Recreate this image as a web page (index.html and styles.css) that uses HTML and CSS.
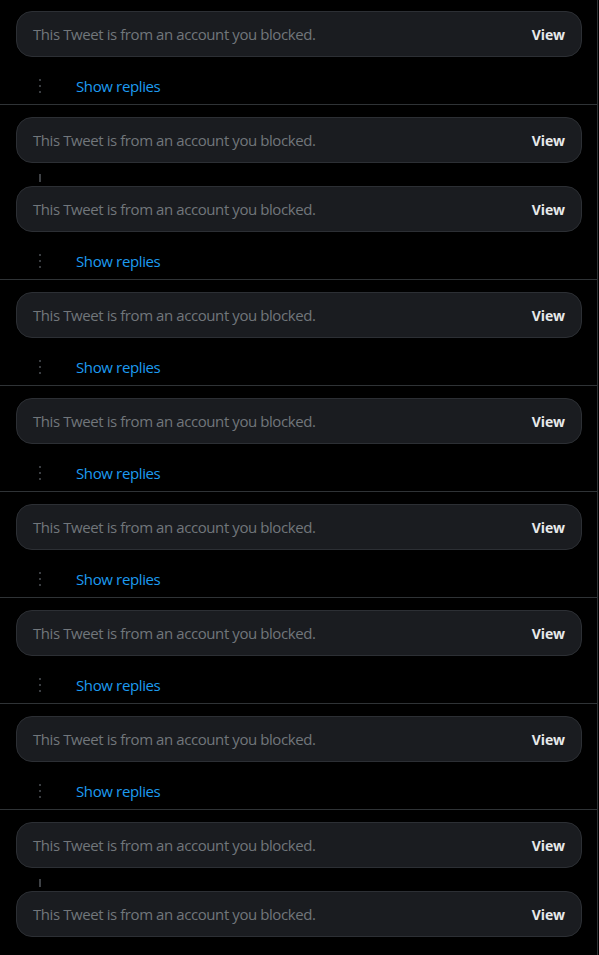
FILE: index.html
```html
<!DOCTYPE html>
<html lang="en">
<head>
<meta charset="utf-8">
<title>Blocked tweets</title>
<link rel="stylesheet" href="styles.css">
</head>
<body>
<main class="timeline">
  <section class="thread">
    <div class="blocked"><span class="msg">This Tweet is from an account you blocked.</span><button class="view">View</button></div>
    <div class="replies"><span class="dots"><i></i><i></i><i></i></span><a class="show" href="#">Show replies</a></div>
  </section>
  <section class="thread">
    <div class="blocked"><span class="msg">This Tweet is from an account you blocked.</span><button class="view">View</button></div>
    <div class="connector"><i></i></div>
    <div class="blocked"><span class="msg">This Tweet is from an account you blocked.</span><button class="view">View</button></div>
    <div class="replies"><span class="dots"><i></i><i></i><i></i></span><a class="show" href="#">Show replies</a></div>
  </section>
  <section class="thread">
    <div class="blocked"><span class="msg">This Tweet is from an account you blocked.</span><button class="view">View</button></div>
    <div class="replies"><span class="dots"><i></i><i></i><i></i></span><a class="show" href="#">Show replies</a></div>
  </section>
  <section class="thread">
    <div class="blocked"><span class="msg">This Tweet is from an account you blocked.</span><button class="view">View</button></div>
    <div class="replies"><span class="dots"><i></i><i></i><i></i></span><a class="show" href="#">Show replies</a></div>
  </section>
  <section class="thread">
    <div class="blocked"><span class="msg">This Tweet is from an account you blocked.</span><button class="view">View</button></div>
    <div class="replies"><span class="dots"><i></i><i></i><i></i></span><a class="show" href="#">Show replies</a></div>
  </section>
  <section class="thread">
    <div class="blocked"><span class="msg">This Tweet is from an account you blocked.</span><button class="view">View</button></div>
    <div class="replies"><span class="dots"><i></i><i></i><i></i></span><a class="show" href="#">Show replies</a></div>
  </section>
  <section class="thread">
    <div class="blocked"><span class="msg">This Tweet is from an account you blocked.</span><button class="view">View</button></div>
    <div class="replies"><span class="dots"><i></i><i></i><i></i></span><a class="show" href="#">Show replies</a></div>
  </section>
  <section class="thread">
    <div class="blocked"><span class="msg">This Tweet is from an account you blocked.</span><button class="view">View</button></div>
    <div class="connector"><i></i></div>
    <div class="blocked"><span class="msg">This Tweet is from an account you blocked.</span><button class="view">View</button></div>
  </section>
</main>
</body>
</html>
```

FILE: styles.css
```css
html, body {
  margin: 0;
  padding: 0;
  background: #000;
}
body {
  font-family: "Open Sans", "Noto Sans", "Liberation Sans", sans-serif;
  height: 955px;
  overflow: hidden;
}
.timeline {
  width: 597px;
  border-right: 1px solid #2f3336;
  min-height: 955px;
}
.thread {
  padding: 12px 15px 0 16px;
  border-bottom: 1px solid #2f3336;
}
.thread:first-child {
  padding-top: 11px;
}
.thread:last-child {
  border-bottom: none;
}
.blocked {
  display: flex;
  align-items: center;
  justify-content: space-between;
  height: 44px;
  padding: 0 16px;
  background: #1a1c20;
  border: 1px solid #2c2f34;
  border-radius: 16px;
}
.msg {
  color: #71767b;
  font-size: 15px;
  letter-spacing: -0.42px;
}
.view {
  background: none;
  border: none;
  padding: 0;
  color: #e7e9ea;
  font-family: inherit;
  font-size: 14px;
  font-weight: 700;
  letter-spacing: -0.1px;
  cursor: pointer;
}
.connector {
  height: 23px;
  padding-left: 23px;
  box-sizing: border-box;
  padding-top: 11px;
}
.connector i {
  display: block;
  width: 2px;
  height: 8px;
  background: #3e4145;
}
.replies {
  display: flex;
  align-items: center;
  height: 20px;
  padding: 19px 0 8px 23px;
}
.dots {
  display: flex;
  flex-direction: column;
  gap: 4px;
  width: 2px;
  margin-right: 35px;
}
.dots i {
  display: block;
  width: 2px;
  height: 2px;
  background: #3a3d41;
}
.show {
  color: #1d9bf0;
  font-size: 15px;
  text-decoration: none;
  letter-spacing: -0.37px;
}
```
